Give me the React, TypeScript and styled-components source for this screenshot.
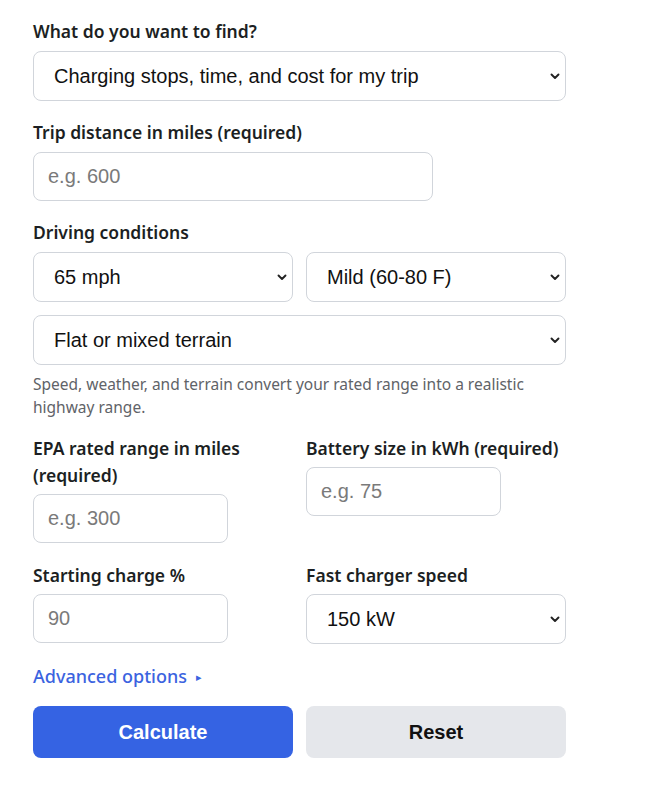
import React from "react";
import styled, { createGlobalStyle } from "styled-components";

const GlobalStyle = createGlobalStyle`
  html, body {
    margin: 0;
    padding: 0;
    background: #ffffff;
  }
  body {
    font-family: "Noto Sans", "Open Sans", sans-serif;
    color: #1f2328;
  }
  * {
    box-sizing: border-box;
  }
`;

const Chevron = () => (
  <svg width="12" height="12" viewBox="0 0 12 12" fill="none">
    <path d="M2.5 4.5L6 8l3.5-3.5" stroke="#222" strokeWidth="1.9" strokeLinecap="round" strokeLinejoin="round" />
  </svg>
);

const App = () => {
  return (
    <>
      <GlobalStyle />
      <Form onSubmit={(e) => e.preventDefault()}>
        <Field>
          <Label>What do you want to find?</Label>
          <SelectBox>
            <SelectText>Charging stops, time, and cost for my trip</SelectText>
            <Chevron />
          </SelectBox>
        </Field>

        <Field>
          <Label>Trip distance in miles (required)</Label>
          <Input width={400} placeholder="e.g. 600" />
        </Field>

        <Field>
          <Label>Driving conditions</Label>
          <Stack>
            <Row>
              <SelectBox>
                <SelectText>65 mph</SelectText>
                <Chevron />
              </SelectBox>
              <SelectBox>
                <SelectText>Mild (60-80 F)</SelectText>
                <Chevron />
              </SelectBox>
            </Row>
            <SelectBox>
              <SelectText>Flat or mixed terrain</SelectText>
              <Chevron />
            </SelectBox>
          </Stack>
          <Hint>
            Speed, weather, and terrain convert your rated range into a realistic highway range.
          </Hint>
        </Field>

        <Grid>
          <Field $tight>
            <Label>EPA rated range in miles (required)</Label>
            <Input width={195} placeholder="e.g. 300" />
          </Field>
          <Field $tight>
            <Label>Battery size in kWh (required)</Label>
            <Input width={195} placeholder="e.g. 75" />
          </Field>
          <Field $tight>
            <Label>Starting charge %</Label>
            <Input width={195} placeholder="90" />
          </Field>
          <Field $tight>
            <Label>Fast charger speed</Label>
            <SelectBox>
              <SelectText>150 kW</SelectText>
              <Chevron />
            </SelectBox>
          </Field>
        </Grid>

        <Advanced>
          Advanced options <Caret>▸</Caret>
        </Advanced>

        <Row>
          <Button $primary type="submit">Calculate</Button>
          <Button type="button">Reset</Button>
        </Row>
      </Form>
    </>
  );
};

export default App;

const Form = styled.form`
  width: 533px;
  margin-left: 33px;
  padding-top: 18px;
  display: flex;
  flex-direction: column;
  gap: 18px;
`;

const Field = styled.div<{ $tight?: boolean }>`
  display: flex;
  flex-direction: column;
  gap: ${(p) => (p.$tight ? 5 : 6)}px;
  min-width: 0;
`;

const Label = styled.label`
  font-family: "Noto Sans", sans-serif;
  font-weight: 600;
  font-size: 17.5px;
  line-height: 27px;
  color: #1c1f23;
`;

const Stack = styled.div`
  display: flex;
  flex-direction: column;
  gap: 13px;
`;

const Row = styled.div`
  display: grid;
  grid-template-columns: 1fr 1fr;
  gap: 13px;
`;

const Grid = styled.div`
  display: grid;
  grid-template-columns: 1fr 1fr;
  column-gap: 13px;
  row-gap: 19px;
  align-items: start;
`;

const SelectBox = styled.div`
  height: 50px;
  border: 1px solid #d1d5db;
  border-radius: 8px;
  background: #fff;
  padding: 0 4px 0 20px;
  display: flex;
  align-items: center;
  justify-content: space-between;
`;

const SelectText = styled.span`
  font-family: "Liberation Sans", Arial, sans-serif;
  font-size: 20px;
  color: #111;
`;

const Input = styled.input<{ width: number }>`
  width: ${(p) => p.width}px;
  height: 49px;
  border: 1px solid #d1d5db;
  border-radius: 8px;
  padding: 0 14px;
  font-family: "Liberation Sans", Arial, sans-serif;
  font-size: 20px;
  color: #111;
  outline: none;

  &::placeholder {
    color: #7a7a7a;
  }
`;

const Hint = styled.p`
  margin: 2px 0 -2px;
  font-family: "Noto Sans", sans-serif;
  font-size: 15.5px;
  line-height: 23px;
  color: #5f6368;
`;

const Advanced = styled.div`
  font-family: "Noto Sans", sans-serif;
  font-weight: 500;
  font-size: 18px;
  color: #3b63e0;
  display: flex;
  align-items: center;
  gap: 9px;
  margin-top: 2px;
`;

const Caret = styled.span`
  font-size: 11px;
`;

const Button = styled.button<{ $primary?: boolean }>`
  height: 52px;
  border: none;
  border-radius: 8px;
  font-family: "Liberation Sans", Arial, sans-serif;
  font-weight: 700;
  font-size: 20px;
  background: ${(p) => (p.$primary ? "#3563e3" : "#e5e7eb")};
  color: ${(p) => (p.$primary ? "#ffffff" : "#111111")};
  cursor: pointer;
`;
